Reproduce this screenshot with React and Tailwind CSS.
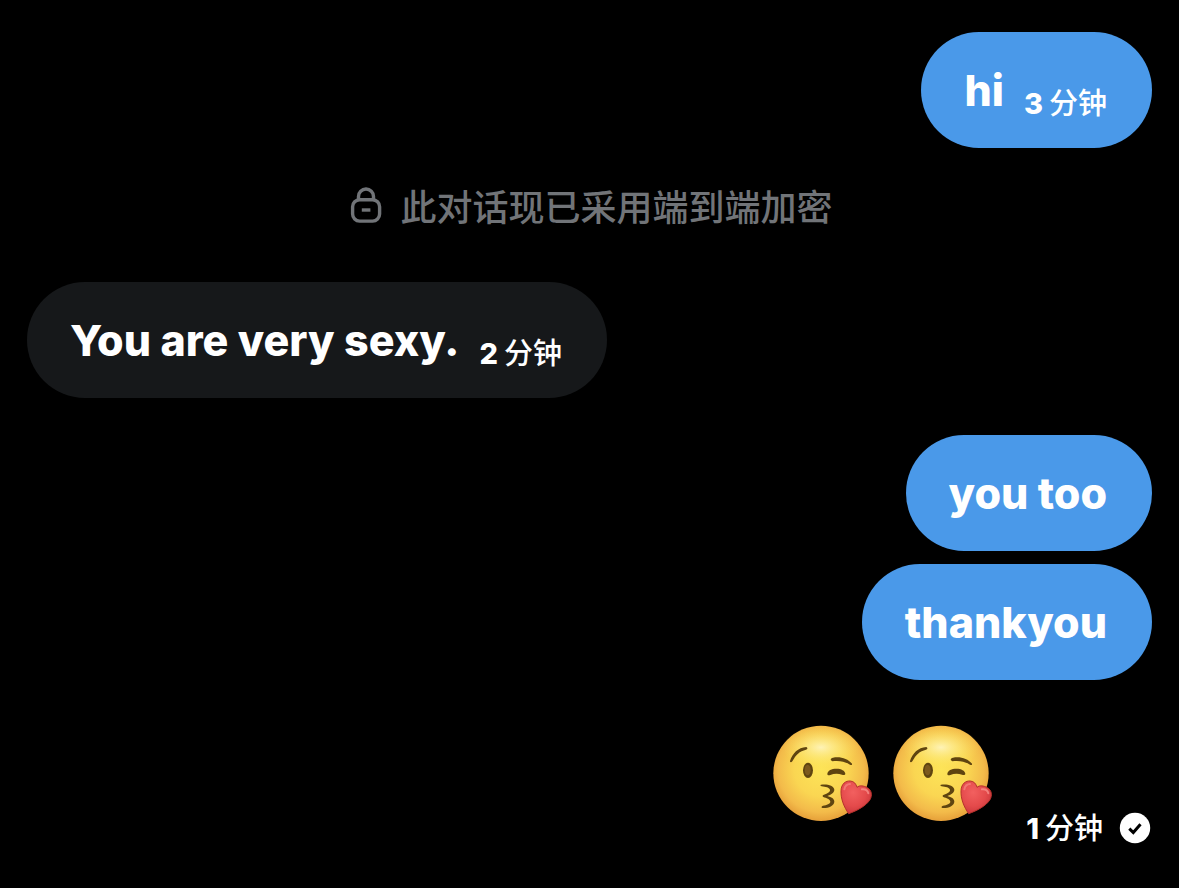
import React from 'react';
import clsx from 'clsx';

const LockIcon = () => (
    <svg viewBox="0 0 32 36" fill="none" stroke="currentColor" strokeWidth="3.4" className="w-8 h-9 shrink-0" aria-hidden="true">
        <path d="M8.5 13V9.5a7.5 7.5 0 0 1 15 0V13" />
        <rect x="2.6" y="12.7" width="27" height="21.4" rx="7" />
        <path d="M11.8 23h8.6" />
    </svg>
);

const SentIcon = () => (
    <svg viewBox="0 0 32 32" className="w-8 h-8 shrink-0" role="img" aria-label="Sent">
        <circle cx="16" cy="16" r="15.2" fill="#fff" />
        <path d="M10.3 16.6l4 4 7.2-8.4" fill="none" stroke="#000" strokeWidth="3" />
    </svg>
);

const KissEmoji = ({ id }) => (
    <svg viewBox="30 39 312 300" className="w-[104px] h-[100px]" role="img" aria-label="😘">
        <defs>
            <radialGradient id={`${id}-face`} cx="0.5" cy="0.46" r="0.56">
                <stop offset="0" stopColor="#fde458" />
                <stop offset="0.5" stopColor="#fad652" />
                <stop offset="0.8" stopColor="#f3bb4a" />
                <stop offset="1" stopColor="#e39a36" />
            </radialGradient>
            <radialGradient id={`${id}-shine`}>
                <stop offset="0" stopColor="#fff7c8" stopOpacity="0.85" />
                <stop offset="1" stopColor="#fdea5c" stopOpacity="0" />
            </radialGradient>
            <radialGradient id={`${id}-heart`} cx="0.4" cy="0.35" r="0.7">
                <stop offset="0" stopColor="#f2605f" />
                <stop offset="0.6" stopColor="#e44a4b" />
                <stop offset="1" stopColor="#c8353a" />
            </radialGradient>
        </defs>
        <circle cx="183" cy="190" r="143" fill={`url(#${id}-face)`} />
        <ellipse cx="183" cy="112" rx="115" ry="62" fill={`url(#${id}-shine)`} />
        <g fill="#5f4410">
            <path d="M90 153C97 131 114 112 139 111C144 113 143 118 138 119C119 123 107 135 97 154C94 158 89 157 90 153Z" />
            <path d="M213 151C211 147 213 144 219 143C242 139 263 146 276 161C277 165 274 166 270 164C254 154 236 151 217 154Z" />
            <path d="M202 192C203 181 215 176 229 176C244 176 255 182 256 191C255 196 251 196 246 194C235 190 222 190 211 195C206 197 202 196 202 192Z" />
            <path d="M183 224C200 221 222 226 223 239C223 248 213 254 202 258C214 261 223 266 223 275C222 288 204 295 188 294C183 293 184 288 189 287C200 285 211 281 211 275C210 267 199 264 190 261C187 259 187 257 190 255C200 251 211 247 210 240C209 233 196 230 185 229C181 228 180 225 183 224Z" />
            <ellipse cx="144" cy="181" rx="15" ry="23" />
        </g>
        <ellipse cx="143" cy="180" rx="9" ry="16" fill="#7c591d" />
        <path
            d="M266 311C252 291 242 267 243 242C244 221 257 212 271 213C282 214 288 221 291 232C299 225 311 227 322 233C336 241 337 257 330 269C318 288 291 302 266 311Z"
            fill={`url(#${id}-heart)`}
            stroke="#b5322c"
            strokeWidth="3"
        />
        <path d="M253 238C255 227 262 222 270 222" fill="none" stroke="#ffa6a0" strokeWidth="6" strokeLinecap="round" opacity="0.45" />
        <path d="M306 238C316 237 323 242 325 250" fill="none" stroke="#ffa6a0" strokeWidth="6" strokeLinecap="round" opacity="0.6" />
    </svg>
);

const TimeAgo = ({ minutes, className }) => (
    <time className={clsx("flex items-baseline gap-1.5 text-[29px] leading-8 whitespace-nowrap", className)}>
        <span className="font-extrabold">{minutes}</span>
        <span className="font-['Noto_Sans_CJK_SC',sans-serif] font-medium">分钟</span>
    </time>
);

const Bubble = ({ text, minutes, mine }) => (
    <div
        className={clsx(
            "flex items-center gap-5 h-[116px] pl-[43px] pr-[45px] rounded-full",
            mine ? "self-end bg-[#4a99e9]" : "self-start bg-[#16181a]"
        )}
    >
        <p className="text-[43px] leading-[50px] font-extrabold whitespace-nowrap">{text}</p>
        {minutes && <TimeAgo minutes={minutes} className="pt-6" />}
    </div>
);

export default function App() {
    return (
        <main className="min-h-screen flex flex-col bg-black text-white px-[27px] pt-8 pb-7 font-[Inter,'Noto_Sans_CJK_SC',sans-serif]">
            <Bubble mine text="hi" minutes={3} />

            <div className="flex items-center justify-center gap-[18px] h-[134px] pl-1 pb-5 text-[#717478]">
                <LockIcon />
                <p className="text-4xl font-medium font-['Noto_Sans_CJK_SC',sans-serif]">此对话现已采用端到端加密</p>
            </div>

            <Bubble text="You are very sexy." minutes={2} />

            <div className="flex flex-col gap-[13px] mt-[37px]">
                <Bubble mine text="you too" />
                <Bubble mine text="thankyou" />
            </div>

            <div className="flex items-end justify-end mt-[43px] pr-px">
                <div className="flex gap-4 pb-[22px]">
                    <KissEmoji id="kiss-1" />
                    <KissEmoji id="kiss-2" />
                </div>
                <div className="flex items-center gap-4 ml-8">
                    <TimeAgo minutes={1} />
                    <SentIcon />
                </div>
            </div>
        </main>
    );
}
